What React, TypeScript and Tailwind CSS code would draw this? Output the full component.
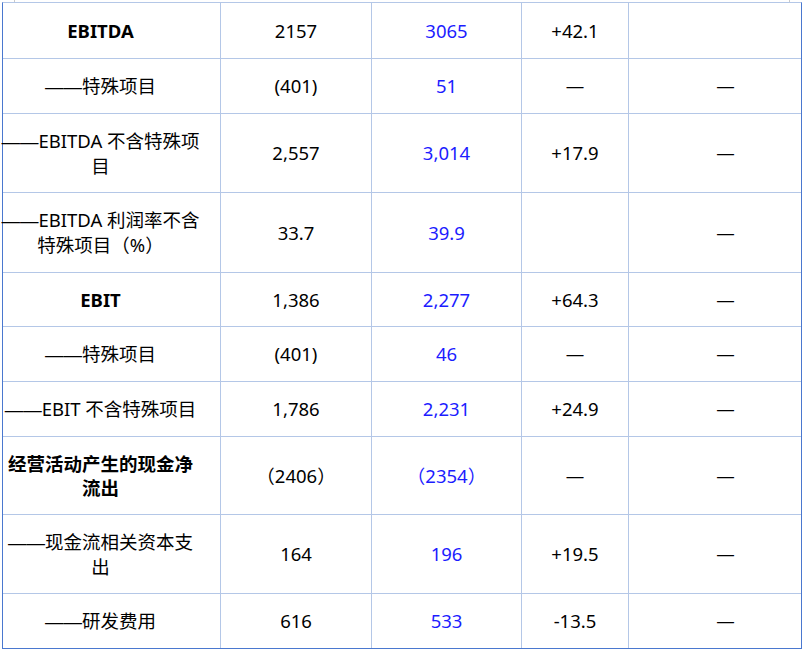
type Row = {
  label: string[];
  bold?: boolean;
  h: string;
  a: string;
  b: string;
  pct: string;
  last: string;
};

const rows: Row[] = [
  { label: ["EBITDA"], bold: true, h: "h-[55px]", a: "2157", b: "3065", pct: "+42.1", last: "" },
  { label: ["——特殊项目"], h: "h-[54px]", a: "(401)", b: "51", pct: "—", last: "—" },
  { label: ["——EBITDA 不含特殊项", "目"], h: "h-[78px]", a: "2,557", b: "3,014", pct: "+17.9", last: "—" },
  { label: ["——EBITDA 利润率不含", "特殊项目（%）"], h: "h-[79px]", a: "33.7", b: "39.9", pct: "", last: "—" },
  { label: ["EBIT"], bold: true, h: "h-[53px]", a: "1,386", b: "2,277", pct: "+64.3", last: "—" },
  { label: ["——特殊项目"], h: "h-[54px]", a: "(401)", b: "46", pct: "—", last: "—" },
  { label: ["——EBIT 不含特殊项目"], h: "h-[54px]", a: "1,786", b: "2,231", pct: "+24.9", last: "—" },
  { label: ["经营活动产生的现金净", "流出"], bold: true, h: "h-[77px]", a: "（2406）", b: "（2354）", pct: "—", last: "—" },
  { label: ["——现金流相关资本支", "出"], h: "h-[78px]", a: "164", b: "196", pct: "+19.5", last: "—" },
  { label: ["——研发费用"], h: "h-[54px]", a: "616", b: "533", pct: "-13.5", last: "—" },
];

// the long dash prefix reads as one unbroken rule
function Label({ text }: { text: string }) {
  if (!text.startsWith("——")) return <>{text}</>;
  return (
    <>
      <span style={{ fontFamily: '"Liberation Sans", sans-serif' }}>——</span>
      {text.slice(2)}
    </>
  );
}

export default function App() {
  return (
    <div
      className="w-[804px] h-[652px] bg-white text-black text-[18.5px] leading-6"
      style={{ fontFamily: '"Noto Sans", "Noto Sans CJK SC", sans-serif' }}
    >
      <div className="flex h-[2px]">
        <div className="w-[14px]" />
        <div className="w-px bg-[#c9c9c9]" />
        <div className="w-[774px]" />
        <div className="w-px bg-[#c9c9c9]" />
      </div>
      <div className="ml-[2px] w-[800px] border-t border-[#b4c7e7] border-l border-l-[#4a78cf] border-r border-r-[#4a78cf] border-b border-b-[#4a78cf]">
        {rows.map((r, i) => (
          <div
            key={i}
            className={`grid grid-cols-[218px_151px_150px_107px_172px] ${
              i < rows.length - 1 ? "border-b border-[#b4c7e7]" : ""
            }`}
          >
            <div
              className={`${r.h} flex flex-col items-center justify-center text-center pr-[22px] border-r border-[#b4c7e7] ${
                r.bold ? "font-bold" : ""
              }`}
            >
              {r.label.map((l, j) => (
                <div key={j} className="whitespace-nowrap">
                  <Label text={l} />
                </div>
              ))}
            </div>
            <div className="flex items-center justify-center border-r border-[#b4c7e7]">{r.a}</div>
            <div className="flex items-center justify-center border-r border-[#b4c7e7] text-[#1c1cff]">{r.b}</div>
            <div className="flex items-center justify-center border-r border-[#b4c7e7]">{r.pct}</div>
            <div className="flex items-center justify-center pl-[21px]">{r.last}</div>
          </div>
        ))}
      </div>
    </div>
  );
}
